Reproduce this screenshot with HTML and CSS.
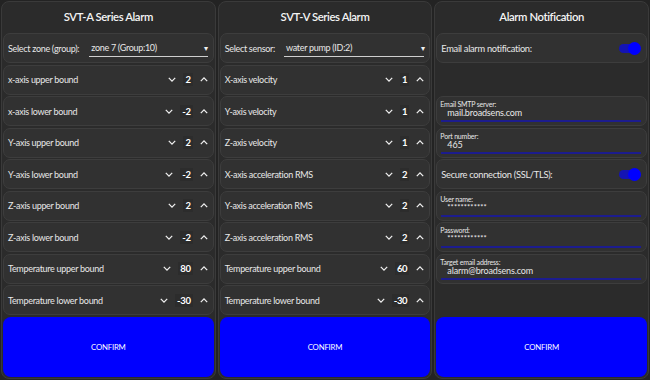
FILE: index.html
```html
<!DOCTYPE html>
<html>
  <head>
    <title>Broadsens Alarm Settings</title>
    <link rel="stylesheet" href="styles.css">
  </head>
  <body>
    <div class="grid">
      <!-- SVT-A panel -->
      <section class="panel">
        <h2 class="panel-title">SVT-A Series Alarm</h2>
        <div class="row">
          <span class="label">Select zone (group):</span>
          <div class="select select-zone">
            <span>zone 7 (Group:10)</span>
            <span class="caret">&#9662;</span>
          </div>
        </div>
        <div class="row">
          <span class="label">x-axis upper bound</span>
          <div class="stepper">
            <svg class="chev" viewBox="0 0 10 6"><path d="M1 1l4 4 4-4" /></svg>
            <span class="val">2</span>
            <svg class="chev" viewBox="0 0 10 6"><path d="M1 5l4-4 4 4" /></svg>
          </div>
        </div>
        <div class="row">
          <span class="label">x-axis lower bound</span>
          <div class="stepper">
            <svg class="chev" viewBox="0 0 10 6"><path d="M1 1l4 4 4-4" /></svg>
            <span class="val">-2</span>
            <svg class="chev" viewBox="0 0 10 6"><path d="M1 5l4-4 4 4" /></svg>
          </div>
        </div>
        <div class="row">
          <span class="label">Y-axis upper bound</span>
          <div class="stepper">
            <svg class="chev" viewBox="0 0 10 6"><path d="M1 1l4 4 4-4" /></svg>
            <span class="val">2</span>
            <svg class="chev" viewBox="0 0 10 6"><path d="M1 5l4-4 4 4" /></svg>
          </div>
        </div>
        <div class="row">
          <span class="label">Y-axis lower bound</span>
          <div class="stepper">
            <svg class="chev" viewBox="0 0 10 6"><path d="M1 1l4 4 4-4" /></svg>
            <span class="val">-2</span>
            <svg class="chev" viewBox="0 0 10 6"><path d="M1 5l4-4 4 4" /></svg>
          </div>
        </div>
        <div class="row">
          <span class="label">Z-axis upper bound</span>
          <div class="stepper">
            <svg class="chev" viewBox="0 0 10 6"><path d="M1 1l4 4 4-4" /></svg>
            <span class="val">2</span>
            <svg class="chev" viewBox="0 0 10 6"><path d="M1 5l4-4 4 4" /></svg>
          </div>
        </div>
        <div class="row">
          <span class="label">Z-axis lower bound</span>
          <div class="stepper">
            <svg class="chev" viewBox="0 0 10 6"><path d="M1 1l4 4 4-4" /></svg>
            <span class="val">-2</span>
            <svg class="chev" viewBox="0 0 10 6"><path d="M1 5l4-4 4 4" /></svg>
          </div>
        </div>
        <div class="row">
          <span class="label">Temperature upper bound</span>
          <div class="stepper">
            <svg class="chev" viewBox="0 0 10 6"><path d="M1 1l4 4 4-4" /></svg>
            <span class="val">80</span>
            <svg class="chev" viewBox="0 0 10 6"><path d="M1 5l4-4 4 4" /></svg>
          </div>
        </div>
        <div class="row">
          <span class="label">Temperature lower bound</span>
          <div class="stepper">
            <svg class="chev" viewBox="0 0 10 6"><path d="M1 1l4 4 4-4" /></svg>
            <span class="val">-30</span>
            <svg class="chev" viewBox="0 0 10 6"><path d="M1 5l4-4 4 4" /></svg>
          </div>
        </div>
        <button class="confirm">CONFIRM</button>
      </section>

      <!-- SVT-V panel -->
      <section class="panel">
        <h2 class="panel-title">SVT-V Series Alarm</h2>
        <div class="row">
          <span class="label">Select sensor:</span>
          <div class="select select-sensor">
            <span>water pump (ID:2)</span>
            <span class="caret">&#9662;</span>
          </div>
        </div>
        <div class="row">
          <span class="label">X-axis velocity</span>
          <div class="stepper">
            <svg class="chev" viewBox="0 0 10 6"><path d="M1 1l4 4 4-4" /></svg>
            <span class="val">1</span>
            <svg class="chev" viewBox="0 0 10 6"><path d="M1 5l4-4 4 4" /></svg>
          </div>
        </div>
        <div class="row">
          <span class="label">Y-axis velocity</span>
          <div class="stepper">
            <svg class="chev" viewBox="0 0 10 6"><path d="M1 1l4 4 4-4" /></svg>
            <span class="val">1</span>
            <svg class="chev" viewBox="0 0 10 6"><path d="M1 5l4-4 4 4" /></svg>
          </div>
        </div>
        <div class="row">
          <span class="label">Z-axis velocity</span>
          <div class="stepper">
            <svg class="chev" viewBox="0 0 10 6"><path d="M1 1l4 4 4-4" /></svg>
            <span class="val">1</span>
            <svg class="chev" viewBox="0 0 10 6"><path d="M1 5l4-4 4 4" /></svg>
          </div>
        </div>
        <div class="row">
          <span class="label">X-axis acceleration RMS</span>
          <div class="stepper">
            <svg class="chev" viewBox="0 0 10 6"><path d="M1 1l4 4 4-4" /></svg>
            <span class="val">2</span>
            <svg class="chev" viewBox="0 0 10 6"><path d="M1 5l4-4 4 4" /></svg>
          </div>
        </div>
        <div class="row">
          <span class="label">Y-axis acceleration RMS</span>
          <div class="stepper">
            <svg class="chev" viewBox="0 0 10 6"><path d="M1 1l4 4 4-4" /></svg>
            <span class="val">2</span>
            <svg class="chev" viewBox="0 0 10 6"><path d="M1 5l4-4 4 4" /></svg>
          </div>
        </div>
        <div class="row">
          <span class="label">Z-axis acceleration RMS</span>
          <div class="stepper">
            <svg class="chev" viewBox="0 0 10 6"><path d="M1 1l4 4 4-4" /></svg>
            <span class="val">2</span>
            <svg class="chev" viewBox="0 0 10 6"><path d="M1 5l4-4 4 4" /></svg>
          </div>
        </div>
        <div class="row">
          <span class="label">Temperature upper bound</span>
          <div class="stepper">
            <svg class="chev" viewBox="0 0 10 6"><path d="M1 1l4 4 4-4" /></svg>
            <span class="val">60</span>
            <svg class="chev" viewBox="0 0 10 6"><path d="M1 5l4-4 4 4" /></svg>
          </div>
        </div>
        <div class="row">
          <span class="label">Temperature lower bound</span>
          <div class="stepper">
            <svg class="chev" viewBox="0 0 10 6"><path d="M1 1l4 4 4-4" /></svg>
            <span class="val">-30</span>
            <svg class="chev" viewBox="0 0 10 6"><path d="M1 5l4-4 4 4" /></svg>
          </div>
        </div>
        <button class="confirm">CONFIRM</button>
      </section>

      <!-- Notification panel -->
      <section class="panel">
        <h2 class="panel-title">Alarm Notification</h2>
        <div class="row">
          <span class="label label-lg">Email alarm notification:</span>
          <span class="toggle"><span class="knob"></span></span>
        </div>
        <div class="spacer"></div>
        <div class="row field">
          <span class="field-label">Email SMTP server:</span>
          <span class="field-value">mail.broadsens.com</span>
        </div>
        <div class="row field">
          <span class="field-label">Port number:</span>
          <span class="field-value">465</span>
        </div>
        <div class="row">
          <span class="label label-lg">Secure connection (SSL/TLS):</span>
          <span class="toggle"><span class="knob"></span></span>
        </div>
        <div class="row field">
          <span class="field-label">User name:</span>
          <span class="field-value secret">************</span>
        </div>
        <div class="row field">
          <span class="field-label">Password:</span>
          <span class="field-value secret">************</span>
        </div>
        <div class="row field">
          <span class="field-label">Target email address:</span>
          <span class="field-value">alarm@broadsens.com</span>
        </div>
        <div class="spacer"></div>
        <button class="confirm">CONFIRM</button>
      </section>
    </div>
  </body>
</html>
```

FILE: styles.css
```css
:root {
  --page: #232323;
  --panel: #2b2b2b;
  --card: #313131;
  --line: #3d3d3d;
  --text: #e8e8e8;
  --blue: #0000ff;
}

body {
  margin: 0;
  background: var(--page);
  color: var(--text);
  font-family: Lato, "Noto Sans", sans-serif;
  font-size: 9px;
  letter-spacing: -0.3px;
}

.grid {
  display: grid;
  grid-template-columns: repeat(3, 1fr);
  gap: 2px;
  padding: 1px;
  height: 378px;
}

.panel {
  display: flex;
  flex-direction: column;
  gap: 1.5px;
  background: var(--panel);
  border: 1px solid #3a3a3a;
  border-radius: 8px;
  padding: 0 1px 1px;
  min-width: 0;
}

.panel-title {
  margin: 0;
  height: 29.5px;
  line-height: 29px;
  text-align: center;
  font-size: 11.3px;
  font-weight: 600;
  letter-spacing: -0.4px;
  color: #f4f4f4;
  flex-shrink: 0;
}

.row {
  box-sizing: border-box;
  height: 30px;
  display: flex;
  align-items: center;
  justify-content: space-between;
  padding: 0 5px 0 4px;
  background: var(--card);
  border: 1px solid var(--line);
  border-radius: 7px;
  flex-shrink: 0;
}

.spacer {
  height: 30px;
  flex-shrink: 0;
}

.label {
  white-space: nowrap;
}

.label-lg {
  font-size: 9.3px;
}

.select {
  display: flex;
  align-items: center;
  justify-content: space-between;
  height: 16px;
  border-bottom: 1.5px solid #cfcfcf;
  margin-left: 10px;
  padding: 0 0 0 2px;
  flex: 1;
}

.select-sensor {
  margin-left: 9px;
}

.caret {
  font-size: 8px;
  color: #f0f0f0;
}

.stepper {
  display: flex;
  align-items: center;
  gap: 7px;
}

.chev {
  width: 8px;
  height: 5px;
  fill: none;
  stroke: #f0f0f0;
  stroke-width: 1.6;
}

.val {
  font-weight: 700;
  font-size: 9.5px;
  color: #fff;
  padding: 1px 2px;
  background: #2c2c2c;
}

.toggle {
  position: relative;
  width: 19px;
  height: 9px;
  border-radius: 5px;
  background: #1414b4;
  margin-right: 3px;
}

.knob {
  position: absolute;
  right: -3px;
  top: -2px;
  width: 13px;
  height: 13px;
  border-radius: 50%;
  background: var(--blue);
}

.field {
  flex-direction: column;
  align-items: stretch;
  justify-content: flex-start;
  padding: 3px 5px 0 3px;
}

.field-label {
  font-size: 7px;
  line-height: 8px;
  letter-spacing: -0.2px;
}

.field-value {
  font-size: 9px;
  line-height: 10px;
  letter-spacing: -0.15px;
  padding: 0 0 2px 6px;
  border-bottom: 2px solid #1c1c8e;
  margin-left: 1px;
}

.secret {
  font-size: 7.5px;
  letter-spacing: 0.1px;
}

.confirm {
  flex: 1;
  border: none;
  border-radius: 8px;
  background: var(--blue);
  color: #fff;
  font-family: Lato, "Noto Sans", sans-serif;
  font-size: 7.8px;
  letter-spacing: -0.2px;
  margin-top: 0.5px;
}
```
